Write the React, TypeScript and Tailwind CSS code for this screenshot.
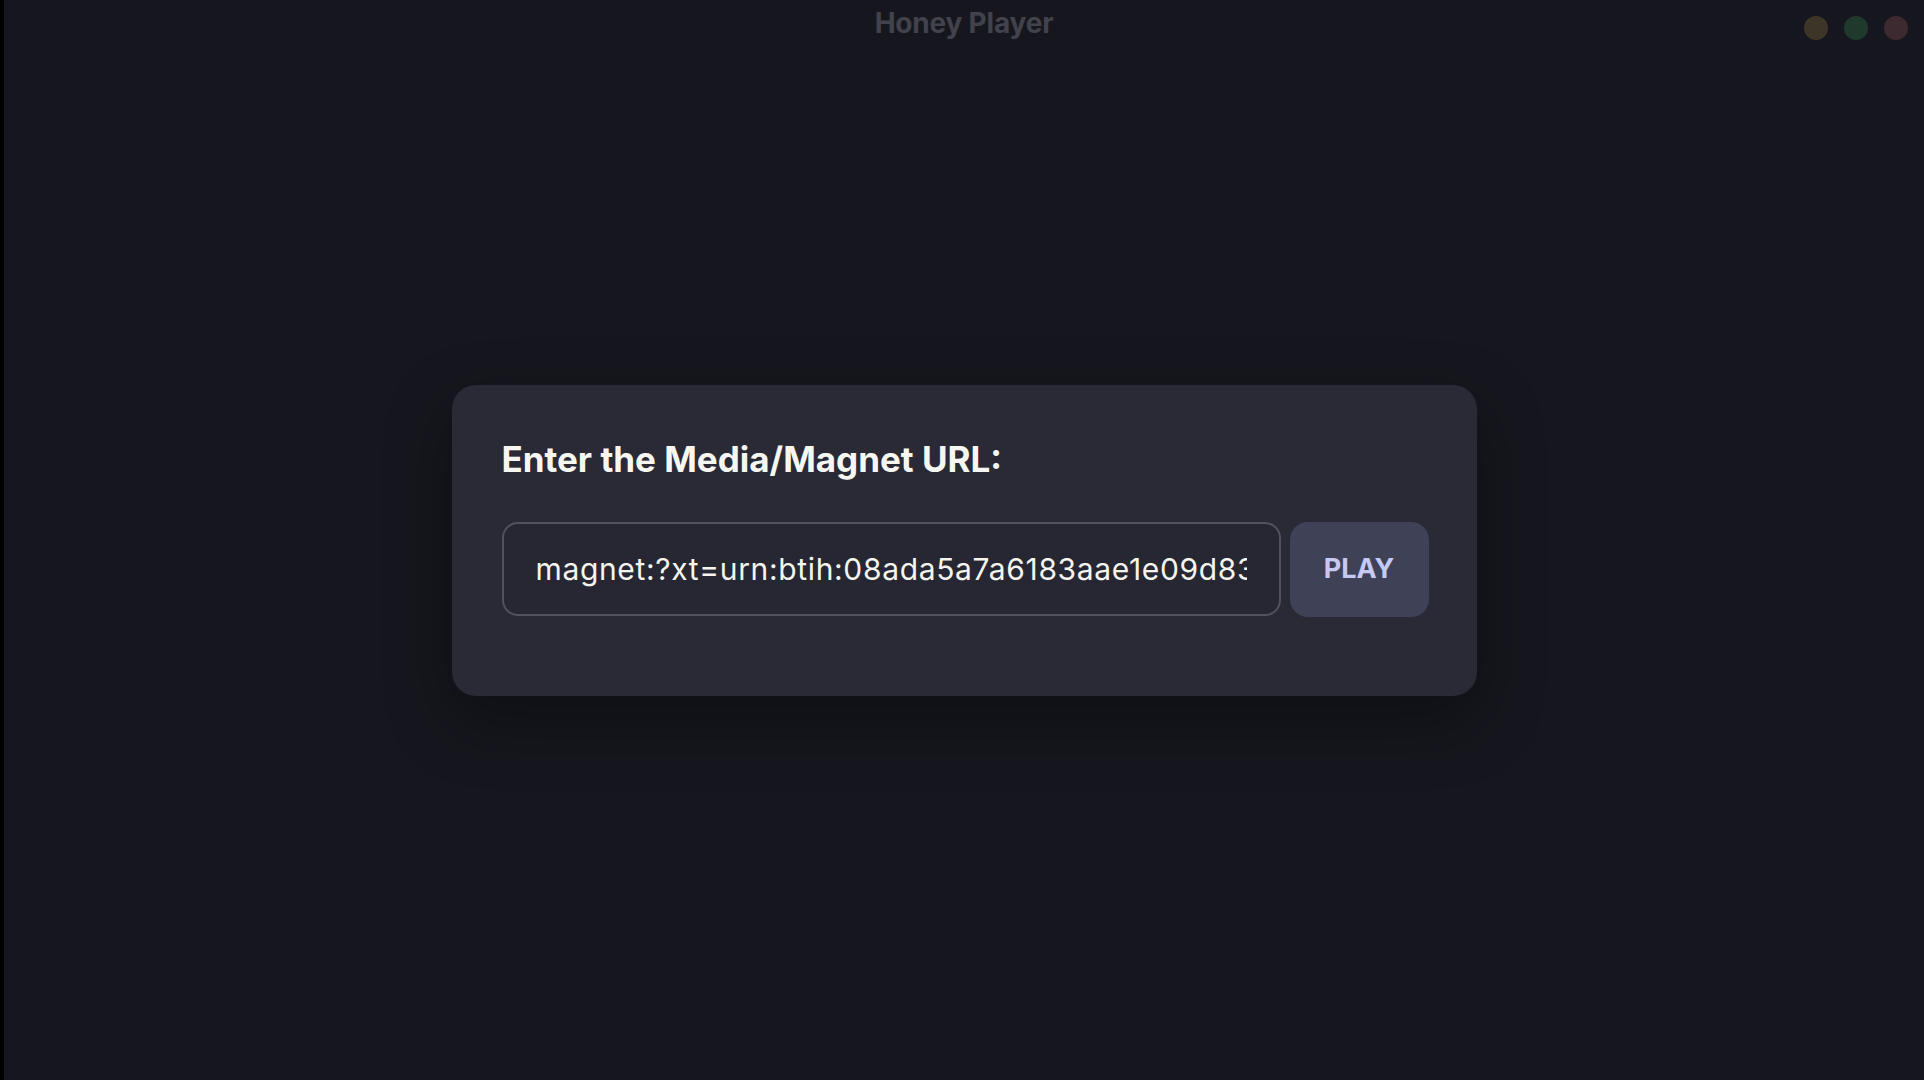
import { useState } from "react";

const magnet =
  "magnet:?xt=urn:btih:08ada5a7a6183aae1e09d831df6748d566095a10&dn=Sintel&tr=udp%3A%2F%2Fexplodie.org%3A6969";

function TitleBar() {
  return (
    <div className="absolute inset-x-0 top-0 h-[46px] flex items-center justify-center">
      <div className="text-[28px] font-bold leading-none text-[#41424b] tracking-[-0.2px]">Honey Player</div>
      <div className="absolute right-[16px] top-[16px] flex gap-[16px]">
        <span className="h-[24px] w-[24px] rounded-full bg-[#3d3528]" />
        <span className="h-[24px] w-[24px] rounded-full bg-[#1f3a2d]" />
        <span className="h-[24px] w-[24px] rounded-full bg-[#3d2a30]" />
      </div>
    </div>
  );
}

export default function App() {
  const [url, setUrl] = useState(magnet);

  return (
    <div className="flex h-screen w-full font-['Inter','Noto_Sans',sans-serif]">
      <div className="w-[4px] shrink-0 bg-black" />
      <main className="relative flex-1 bg-[#16171e] flex items-center justify-center">
        <TitleBar />
        <div className="w-[1025px] rounded-3xl bg-[#292a36] pl-[50px] pr-[48px] pt-[54px] pb-[79px] shadow-[0_24px_64px_rgba(0,0,0,0.35)]">
          <h1 className="text-[35px] font-bold leading-[40px] text-[#f7f7f2]">Enter the Media/Magnet URL:</h1>
          <div className="mt-[43px] flex gap-[9px]">
            <input
              value={url}
              onChange={(e) => setUrl(e.target.value)}
              className="h-[94px] flex-1 min-w-0 rounded-[16px] border-2 border-[#50525d] bg-[#262733] px-[32px] text-[30px] tracking-[0.65px] text-[#f5f5ee] outline-none"
            />
            <button className="h-[95px] w-[139px] rounded-[18px] bg-[#3f4257] text-[27px] font-bold text-[#c5c9f6]">
              PLAY
            </button>
          </div>
        </div>
      </main>
    </div>
  );
}
